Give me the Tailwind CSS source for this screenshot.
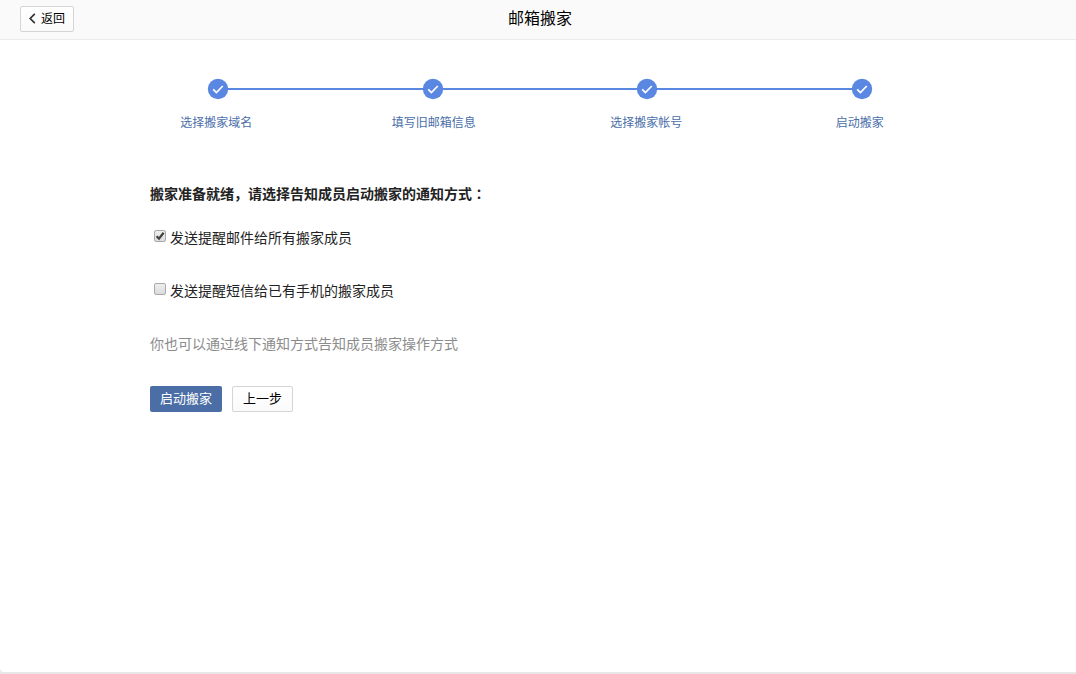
<!DOCTYPE html>
<html lang="zh-CN">
<head>
<meta charset="utf-8">
<meta name="viewport" content="width=device-width, initial-scale=1">
<title>邮箱搬家</title>
<script src="https://cdn.jsdelivr.net/npm/@tailwindcss/browser@4"></script>
</head>
<body class="flex min-h-screen flex-col bg-[#e8e8e8] pb-0.5 font-['Liberation_Sans','Noto_Sans_CJK_SC',sans-serif] text-sm text-[#222]">
<div class="flex flex-1 flex-col overflow-hidden rounded-bl bg-white">
  <header class="grid h-10 grid-cols-[1fr_auto_1fr] items-center border-b border-[#ececec] bg-[#fafafa] pl-5 pr-4">
    <button type="button" class="-mt-px flex h-[26px] w-[54px] items-center gap-1 justify-self-start rounded-xs border border-[#d5d5d5] bg-linear-to-b from-white to-[#fafafa] pl-2 text-xs text-black">
      <svg class="h-3 w-2 shrink-0" viewBox="0 0 8 12" fill="none" stroke="#333" stroke-width="1.7" aria-hidden="true"><path d="M5.8.9 1.2 5.5l4.6 4.6"/></svg>返回
    </button>
    <h1 class="-mt-0.5 text-base text-black">邮箱搬家</h1>
  </header>

  <main class="pl-1 pt-[38px]">
    <ol class="mx-auto grid max-w-[858px] grid-cols-4 text-xs text-[#4a6ea9]">
      <li class="flex flex-col items-center gap-[15px]">
        <div class="flex w-full items-center">
          <span class="h-0.5 flex-1"></span>
          <svg class="size-[22px] -mx-px" viewBox="0 0 22 22" aria-hidden="true"><circle cx="11" cy="11" r="10.2" fill="#5a87e2"/><path d="m6.2 11.4 3.2 3.2 6.4-6.6" fill="none" stroke="#fff" stroke-width="1.7"/></svg>
          <span class="h-0.5 flex-1 bg-[#5a87e2]"></span>
        </div>
        <span class="pr-1">选择搬家域名</span>
      </li>
      <li class="flex flex-col items-center gap-[15px]">
        <div class="flex w-full items-center">
          <span class="h-0.5 flex-1 bg-[#5a87e2]"></span>
          <svg class="size-[22px] -mx-px" viewBox="0 0 22 22" aria-hidden="true"><circle cx="11" cy="11" r="10.2" fill="#5a87e2"/><path d="m6.2 11.4 3.2 3.2 6.4-6.6" fill="none" stroke="#fff" stroke-width="1.7"/></svg>
          <span class="h-0.5 flex-1 bg-[#5a87e2]"></span>
        </div>
        <span class="pl-0.5">填写旧邮箱信息</span>
      </li>
      <li class="flex flex-col items-center gap-[15px]">
        <div class="flex w-full items-center">
          <span class="h-0.5 flex-1 bg-[#5a87e2]"></span>
          <svg class="size-[22px] -mx-px" viewBox="0 0 22 22" aria-hidden="true"><circle cx="11" cy="11" r="10.2" fill="#5a87e2"/><path d="m6.2 11.4 3.2 3.2 6.4-6.6" fill="none" stroke="#fff" stroke-width="1.7"/></svg>
          <span class="h-0.5 flex-1 bg-[#5a87e2]"></span>
        </div>
        <span class="pr-0.5">选择搬家帐号</span>
      </li>
      <li class="flex flex-col items-center gap-[15px]">
        <div class="flex w-full items-center">
          <span class="h-0.5 flex-1 bg-[#5a87e2]"></span>
          <svg class="size-[22px] -mx-px" viewBox="0 0 22 22" aria-hidden="true"><circle cx="11" cy="11" r="10.2" fill="#5a87e2"/><path d="m6.2 11.4 3.2 3.2 6.4-6.6" fill="none" stroke="#fff" stroke-width="1.7"/></svg>
          <span class="h-0.5 flex-1"></span>
        </div>
        <span class="pr-1">启动搬家</span>
      </li>
    </ol>

    <form class="mx-auto max-w-[780px] pt-[53px]">
      <h2 class="font-bold">搬家准备就绪，请选择告知成员启动搬家的通知方式<span lang="ja" class="font-['Noto_Sans_CJK_JP',sans-serif] leading-none">：</span></h2>
      <div class="mt-6 flex items-center gap-1 pl-1">
        <span class="-mt-1 grid">
          <input id="mail" type="checkbox" checked class="peer col-start-1 row-start-1 size-3 appearance-none rounded-xs border border-[#a9a9a9] bg-linear-to-b from-[#eee] to-[#dcdcdc]">
          <svg class="pointer-events-none invisible col-start-1 row-start-1 size-3 peer-checked:visible" viewBox="0 0 12 12" fill="none" stroke="#404040" stroke-width="2.2" aria-hidden="true"><path d="M2.6 6.2 5 8.6 9.6 2.8"/></svg>
        </span>
        <label for="mail">发送提醒邮件给所有搬家成员</label>
      </div>
      <div class="mt-[33px] flex items-center gap-1 pl-1">
        <span class="-mt-1 grid">
          <input id="sms" type="checkbox" class="peer col-start-1 row-start-1 size-3 appearance-none rounded-xs border border-[#a9a9a9] bg-linear-to-b from-[#eee] to-[#dcdcdc]">
          <svg class="pointer-events-none invisible col-start-1 row-start-1 size-3 peer-checked:visible" viewBox="0 0 12 12" fill="none" stroke="#404040" stroke-width="2.2" aria-hidden="true"><path d="M2.6 6.2 5 8.6 9.6 2.8"/></svg>
        </span>
        <label for="sms">发送提醒短信给已有手机的搬家成员</label>
      </div>
      <p class="mt-[33px] text-[#8c8c8c]">你也可以通过线下通知方式告知成员搬家操作方式</p>
      <div class="mt-8 flex gap-2.5 text-[13px]">
        <button type="button" class="h-[26px] rounded-xs bg-[#4a6ea5] px-2.5 text-white">启动搬家</button>
        <button type="button" class="h-[26px] rounded-xs border border-[#d5d5d5] bg-linear-to-b from-white to-[#fafafa] px-2.5 text-black">上一步</button>
      </div>
    </form>
  </main>
</div>
</body>
</html>
